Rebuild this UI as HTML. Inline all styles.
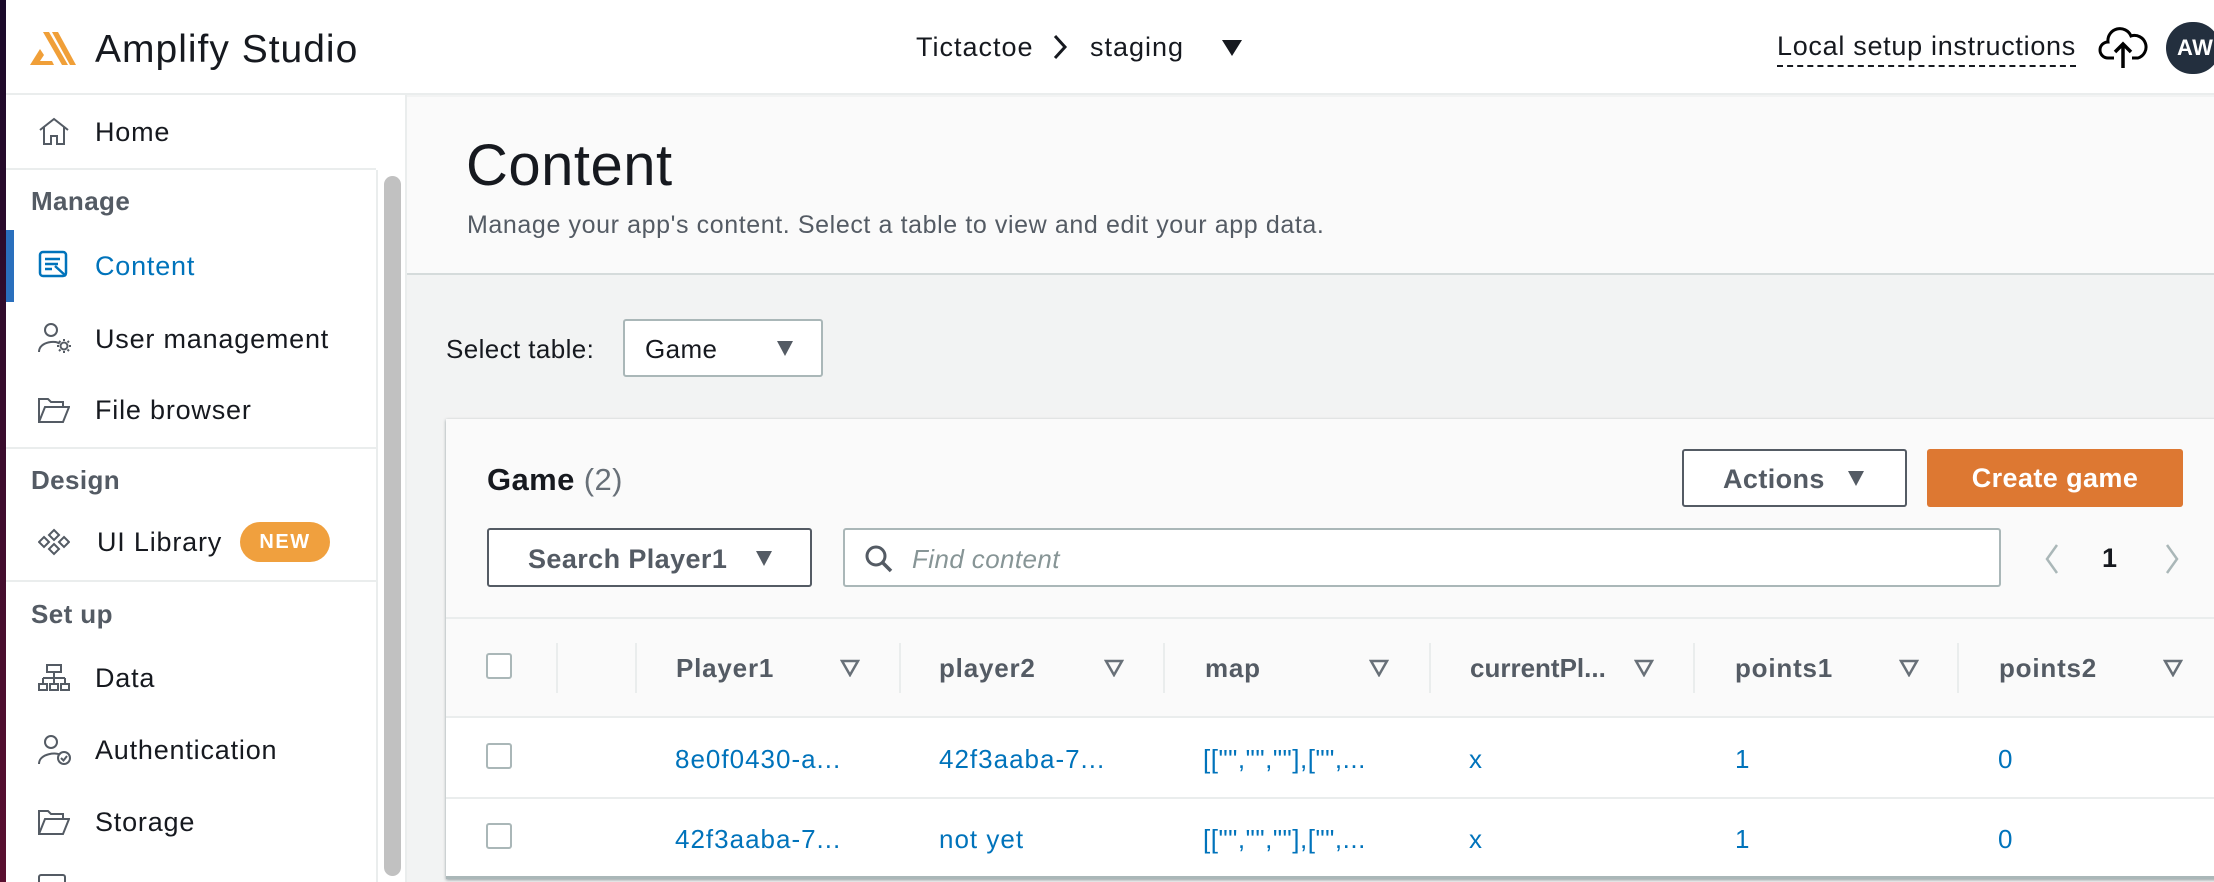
<!DOCTYPE html>
<html><head><meta charset="utf-8">
<style>
*{box-sizing:border-box;margin:0;padding:0}
html,body{width:2214px;height:882px;overflow:hidden}
body{position:relative;background:#f2f3f3;font-family:"Liberation Sans",sans-serif;color:#16191f;letter-spacing:0.4px}
.a{position:absolute;white-space:nowrap}
.side{font-size:27px;color:#16191f;letter-spacing:0.8px}
.sec{font-size:26px;font-weight:bold;color:#545b64}
.hd{font-size:26px;font-weight:bold;color:#545b64;letter-spacing:0.8px}
.cell{font-size:26px;color:#0073bb;letter-spacing:1px}
.tri{width:0;height:0;border-left:8px solid transparent;border-right:8px solid transparent;border-top:15px solid #545b64}
.cb{width:26px;height:26px;border:2px solid #aab7b8;border-radius:3px;background:#fff}
.sep{width:2px;height:50px;background:#eaeded}
</style></head><body>
<div class="a" style="left:0;top:0;width:6px;height:882px;background:linear-gradient(#1a0a2a,#5a0f30)"></div>
<div class="a" style="left:6px;top:0;width:2208px;height:95px;background:#fff;border-bottom:2px solid #eaeded"></div>
<svg class="a" style="left:30px;top:32px" width="46" height="34" viewBox="0 0 46 34"><path d="M0 33 L10 17 L14 23 L10 29 H22 L24 33Z" fill="#f09f38"/><path d="M13 0 H19 L38 33 H32Z" fill="#f09f38"/><path d="M22 0 H28 L46 33 H40Z" fill="#f09f38"/></svg>
<div class="a" style="left:95px;top:28px;font-size:39px;color:#16191f;letter-spacing:1px">Amplify Studio</div>
<div class="a" style="left:916px;top:32px;font-size:27px;color:#16191f;letter-spacing:1px">Tictactoe</div>
<svg class="a" style="left:1052px;top:34px" width="16" height="26" viewBox="0 0 16 26"><path d="M3 2 L13 13 L3 24" stroke="#16191f" stroke-width="3" fill="none"/></svg>
<div class="a" style="left:1090px;top:32px;font-size:27px;color:#16191f;letter-spacing:1px">staging</div>
<div class="a tri" style="left:1222px;top:40px;border-left-width:10px;border-right-width:10px;border-top-width:16px;border-top-color:#16191f"></div>
<div class="a" style="left:1777px;top:31px;font-size:27px;color:#16191f;border-bottom:2px dashed #16191f;padding-bottom:3px;letter-spacing:0.7px">Local setup instructions</div>
<svg class="a" style="left:2098px;top:26px" width="50" height="42" viewBox="0 0 50 42"><path d="M16 32 H10 A8 8 0 0 1 10 16 A12 12 0 0 1 33 10 A10 10 0 0 1 40 32 H34" stroke="#000" stroke-width="3" fill="none"/><path d="M25 42 V18 M17 26 L25 18 L33 26" stroke="#000" stroke-width="3.5" fill="none"/></svg>
<div class="a" style="left:2166px;top:22px;width:54px;height:52px;border-radius:27px;background:#232f3e;color:#fff;font-size:22px;font-weight:bold;line-height:52px;padding-left:11px">AW</div>
<!-- sidebar -->
<div class="a" style="left:6px;top:95px;width:401px;height:787px;background:#fff;border-right:2px solid #eaeded"></div>
<div class="a" style="left:6px;top:168px;width:370px;height:2px;background:#eaeded"></div>
<div class="a" style="left:376px;top:170px;width:2px;height:712px;background:#eaeded"></div>
<div class="a" style="left:384px;top:176px;width:17px;height:700px;border-radius:9px;background:#c1c1c1"></div>
<svg class="a" style="left:38px;top:116px" width="32" height="30" viewBox="0 0 32 30"><path d="M2 14 L16 3 L30 14 M6 11 V28 H13 V20 H19 V28 H26 V11" stroke="#545b64" stroke-width="2" fill="none"/></svg>
<div class="a side" style="left:95px;top:117px">Home</div>
<div class="a sec" style="left:31px;top:186px">Manage</div>
<div class="a" style="left:6px;top:230px;width:8px;height:72px;background:#2a6fbd"></div>
<svg class="a" style="left:38px;top:250px" width="32" height="30" viewBox="0 0 32 30"><rect x="2" y="2" width="26" height="24" rx="3" stroke="#0073bb" stroke-width="2.5" fill="none"/><path d="M7 9 H22 M7 14 H20 M7 19 H14 M17 16 L28 26" stroke="#0073bb" stroke-width="2.5" fill="none"/></svg>
<div class="a side" style="left:95px;top:251px;color:#0073bb">Content</div>
<svg class="a" style="left:38px;top:322px" width="34" height="32" viewBox="0 0 34 32"><circle cx="13" cy="8" r="6" stroke="#545b64" stroke-width="2" fill="none"/><path d="M1 30 C1 19 20 18 21 22" stroke="#545b64" stroke-width="2" fill="none"/><circle cx="26" cy="24" r="3.5" stroke="#545b64" stroke-width="2" fill="none"/><path d="M26 17 V19 M26 29 V31 M19 24 H21 M31 24 H33 M21 19 L22.5 20.5 M29.5 27.5 L31 29 M31 19 L29.5 20.5 M22.5 27.5 L21 29" stroke="#545b64" stroke-width="2"/></svg>
<div class="a side" style="left:95px;top:324px">User management</div>
<svg class="a" style="left:38px;top:396px" width="32" height="28" viewBox="0 0 32 28"><path d="M1 26 V3 H10 L13 6 H25 V11 M1 26 L7 11 H31 L25 26Z" stroke="#545b64" stroke-width="2" fill="none"/></svg>
<div class="a side" style="left:95px;top:395px">File browser</div>
<div class="a" style="left:6px;top:447px;width:370px;height:2px;background:#eaeded"></div>
<div class="a sec" style="left:31px;top:465px">Design</div>
<svg class="a" style="left:38px;top:528px" width="32" height="28" viewBox="0 0 32 28"><path d="M16 2 L21 7 L16 12 L11 7Z M6 9 L11 14 L6 19 L1 14Z M26 9 L31 14 L26 19 L21 14Z M16 16 L21 21 L16 26 L11 21Z" stroke="#545b64" stroke-width="2" fill="none"/></svg>
<div class="a side" style="left:97px;top:527px">UI Library</div>
<div class="a" style="left:240px;top:522px;width:90px;height:40px;border-radius:20px;background:#f0a03e;color:#fff;font-size:20px;font-weight:bold;text-align:center;line-height:40px;letter-spacing:1.5px">NEW</div>
<div class="a" style="left:6px;top:580px;width:370px;height:2px;background:#eaeded"></div>
<div class="a sec" style="left:31px;top:599px">Set up</div>
<svg class="a" style="left:38px;top:663px" width="32" height="30" viewBox="0 0 32 30"><rect x="9" y="2" width="14" height="7" stroke="#545b64" stroke-width="2" fill="none"/><path d="M16 9 V15 M5 15 H27 M5 15 V21 M16 15 V21 M27 15 V21" stroke="#545b64" stroke-width="2" fill="none"/><rect x="1" y="21" width="8" height="6" stroke="#545b64" stroke-width="2" fill="none"/><rect x="12" y="21" width="8" height="6" stroke="#545b64" stroke-width="2" fill="none"/><rect x="23" y="21" width="8" height="6" stroke="#545b64" stroke-width="2" fill="none"/></svg>
<div class="a side" style="left:95px;top:663px">Data</div>
<svg class="a" style="left:38px;top:734px" width="34" height="32" viewBox="0 0 34 32"><circle cx="13" cy="8" r="6" stroke="#545b64" stroke-width="2" fill="none"/><path d="M1 30 C1 19 20 18 22 21" stroke="#545b64" stroke-width="2" fill="none"/><circle cx="26" cy="24" r="6" stroke="#545b64" stroke-width="2" fill="none"/><path d="M23 24 L25.5 26.5 L29 22" stroke="#545b64" stroke-width="2" fill="none"/></svg>
<div class="a side" style="left:95px;top:735px">Authentication</div>
<svg class="a" style="left:38px;top:808px" width="32" height="28" viewBox="0 0 32 28"><path d="M1 26 V3 H10 L13 6 H25 V11 M1 26 L7 11 H31 L25 26Z" stroke="#545b64" stroke-width="2" fill="none"/></svg>
<div class="a side" style="left:95px;top:807px">Storage</div>
<div class="a" style="left:38px;top:874px;width:28px;height:12px;border:2px solid #545b64;border-radius:3px"></div>
<!-- main header -->
<div class="a" style="left:407px;top:97px;width:1807px;height:178px;background:#fafafa;border-bottom:2px solid #d5dbdb"></div>
<div class="a" style="left:466px;top:132px;font-size:58px;color:#16191f;letter-spacing:0.5px">Content</div>
<div class="a" style="left:467px;top:211px;font-size:25px;color:#545b64;letter-spacing:0.6px">Manage your app's content. Select a table to view and edit your app data.</div>
<div class="a" style="left:446px;top:334px;font-size:26px;color:#16191f">Select table:</div>
<div class="a" style="left:623px;top:319px;width:200px;height:58px;background:#fff;border:2px solid #aab7b8;border-radius:3px"></div>
<div class="a" style="left:645px;top:334px;font-size:26px">Game</div>
<div class="a tri" style="left:777px;top:341px"></div>
<!-- table container -->
<div class="a" style="left:446px;top:419px;width:1780px;height:460px;background:#fafafa;box-shadow:0 1px 3px rgba(0,28,36,.4)"></div>
<div class="a" style="left:487px;top:462px;font-size:31px;font-weight:bold">Game <span style="font-weight:normal;color:#687078">(2)</span></div>
<div class="a" style="left:1682px;top:449px;width:225px;height:58px;background:#fff;border:2px solid #545b64;border-radius:3px"></div>
<div class="a" style="left:1723px;top:464px;font-size:27px;font-weight:bold;color:#545b64">Actions</div>
<div class="a tri" style="left:1848px;top:471px"></div>
<div class="a" style="left:1927px;top:449px;width:256px;height:58px;background:#dd7832;border-radius:3px;color:#fff;font-size:27px;font-weight:bold;text-align:center;line-height:58px">Create game</div>
<div class="a" style="left:487px;top:528px;width:325px;height:59px;background:#fff;border:2px solid #545b64;border-radius:3px"></div>
<div class="a" style="left:528px;top:544px;font-size:27px;font-weight:bold;color:#545b64">Search Player1</div>
<div class="a tri" style="left:756px;top:551px"></div>
<div class="a" style="left:843px;top:528px;width:1158px;height:59px;background:#fff;border:2px solid #aab7b8;border-radius:3px"></div>
<svg class="a" style="left:864px;top:544px" width="30" height="30" viewBox="0 0 30 30"><circle cx="12" cy="12" r="9" stroke="#545b64" stroke-width="3" fill="none"/><path d="M19 19 L27 27" stroke="#545b64" stroke-width="3.5"/></svg>
<div class="a" style="left:912px;top:544px;font-size:26px;font-style:italic;color:#879596">Find content</div>
<svg class="a" style="left:2042px;top:543px" width="20" height="32" viewBox="0 0 20 32"><path d="M15 2 L5 16 L15 30" stroke="#aab7b8" stroke-width="2.5" fill="none"/></svg>
<div class="a" style="left:2102px;top:543px;font-size:27px;font-weight:bold">1</div>
<svg class="a" style="left:2162px;top:543px" width="20" height="32" viewBox="0 0 20 32"><path d="M5 2 L15 16 L5 30" stroke="#aab7b8" stroke-width="2.5" fill="none"/></svg>
<!-- table -->
<div class="a" style="left:446px;top:617px;width:1768px;height:2px;background:#eaeded"></div>
<div class="a" style="left:446px;top:716px;width:1768px;height:163px;background:#fff;border-top:2px solid #eaeded"></div>
<div class="a" style="left:446px;top:797px;width:1768px;height:2px;background:#eaeded"></div>
<div class="a" style="left:446px;top:876px;width:1768px;height:3px;background:#aab7b8"></div>
<div class="a cb" style="left:486px;top:653px"></div>
<div class="a cb" style="left:486px;top:743px"></div>
<div class="a cb" style="left:486px;top:823px"></div>
<div class="a sep" style="left:556px;top:643px"></div>
<div class="a sep" style="left:635px;top:643px"></div>
<div class="a sep" style="left:899px;top:643px"></div>
<div class="a sep" style="left:1163px;top:643px"></div>
<div class="a sep" style="left:1429px;top:643px"></div>
<div class="a sep" style="left:1693px;top:643px"></div>
<div class="a sep" style="left:1957px;top:643px"></div>
<div class="a hd" style="left:676px;top:653px">Player1</div>
<div class="a hd" style="left:939px;top:653px">player2</div>
<div class="a hd" style="left:1205px;top:653px">map</div>
<div class="a hd" style="left:1470px;top:653px;letter-spacing:0">currentPl...</div>
<div class="a hd" style="left:1735px;top:653px">points1</div>
<div class="a hd" style="left:1999px;top:653px">points2</div>
<svg class="a" style="left:840px;top:659px" width="20" height="18" viewBox="0 0 20 18"><path d="M2 2 H18 L10 16Z" stroke="#687078" stroke-width="2.5" fill="none"/></svg>
<svg class="a" style="left:1104px;top:659px" width="20" height="18" viewBox="0 0 20 18"><path d="M2 2 H18 L10 16Z" stroke="#687078" stroke-width="2.5" fill="none"/></svg>
<svg class="a" style="left:1369px;top:659px" width="20" height="18" viewBox="0 0 20 18"><path d="M2 2 H18 L10 16Z" stroke="#687078" stroke-width="2.5" fill="none"/></svg>
<svg class="a" style="left:1634px;top:659px" width="20" height="18" viewBox="0 0 20 18"><path d="M2 2 H18 L10 16Z" stroke="#687078" stroke-width="2.5" fill="none"/></svg>
<svg class="a" style="left:1899px;top:659px" width="20" height="18" viewBox="0 0 20 18"><path d="M2 2 H18 L10 16Z" stroke="#687078" stroke-width="2.5" fill="none"/></svg>
<svg class="a" style="left:2163px;top:659px" width="20" height="18" viewBox="0 0 20 18"><path d="M2 2 H18 L10 16Z" stroke="#687078" stroke-width="2.5" fill="none"/></svg>
<div class="a cell" style="left:675px;top:744px">8e0f0430-a...</div>
<div class="a cell" style="left:939px;top:744px">42f3aaba-7...</div>
<div class="a cell" style="left:1203px;top:744px;letter-spacing:0.5px">[["","",""],["",...</div>
<div class="a cell" style="left:1469px;top:744px">x</div>
<div class="a cell" style="left:1735px;top:744px">1</div>
<div class="a cell" style="left:1998px;top:744px">0</div>
<div class="a cell" style="left:675px;top:824px">42f3aaba-7...</div>
<div class="a cell" style="left:939px;top:824px">not yet</div>
<div class="a cell" style="left:1203px;top:824px;letter-spacing:0.5px">[["","",""],["",...</div>
<div class="a cell" style="left:1469px;top:824px">x</div>
<div class="a cell" style="left:1735px;top:824px">1</div>
<div class="a cell" style="left:1998px;top:824px">0</div>
</body></html>
